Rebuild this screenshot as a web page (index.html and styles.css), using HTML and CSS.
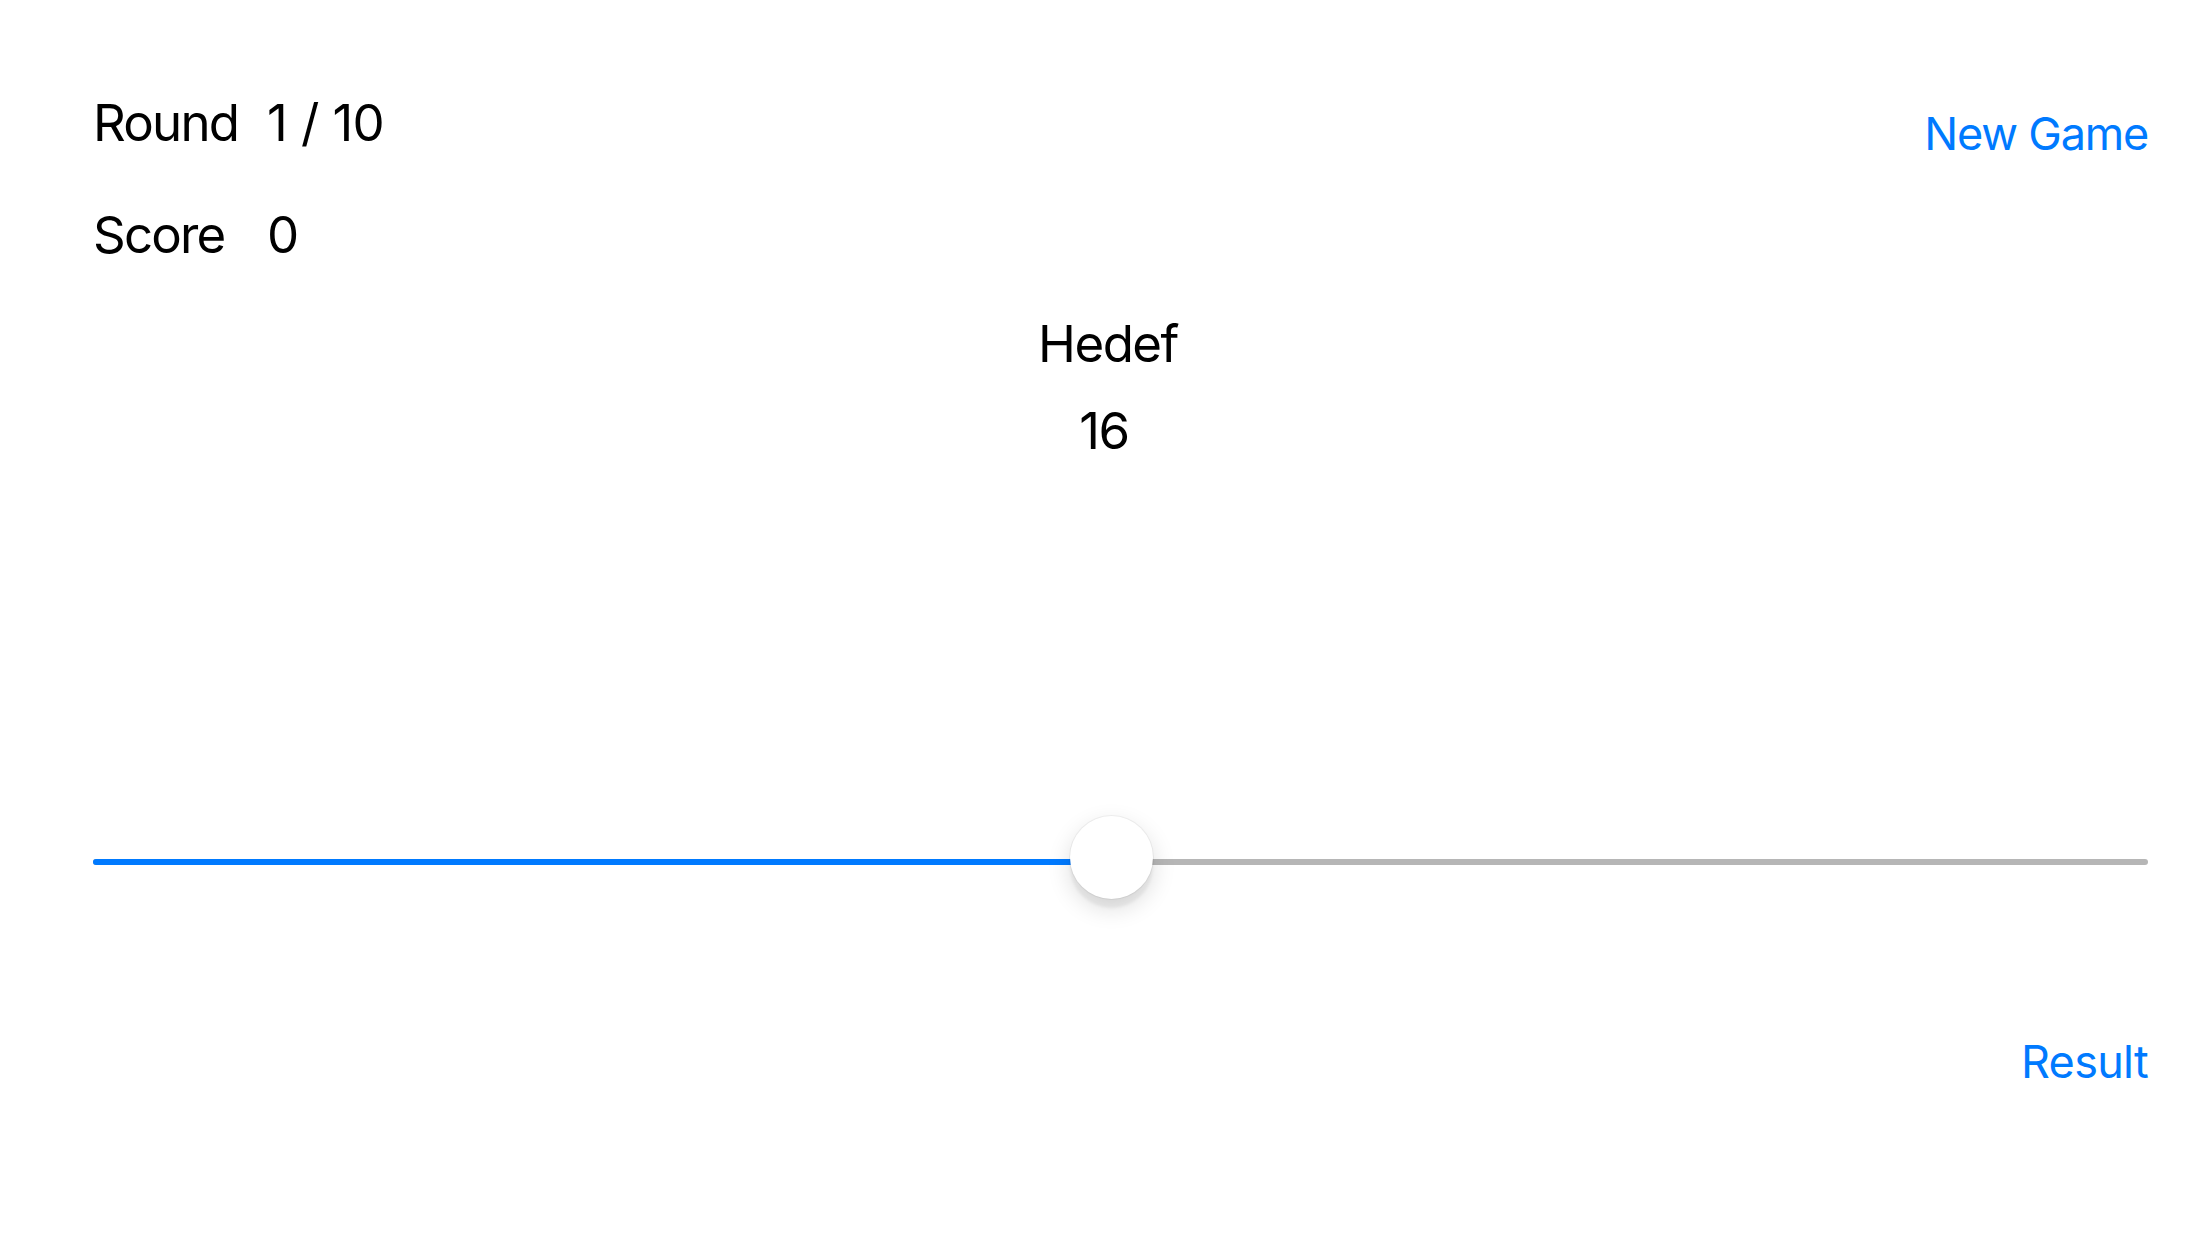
FILE: index.html
```html
<!DOCTYPE html>
<html lang="en">
<head>
<meta charset="utf-8">
<title>Bullseye</title>
<link rel="stylesheet" href="styles.css">
</head>
<body>
<main class="screen">
  <header class="top">
    <div class="stats">
      <span class="label">Round</span><span class="value">1 / 10</span>
      <span class="label">Score</span><span class="value">0</span>
    </div>
    <a class="link new-game" href="#">New Game</a>
  </header>
  <section class="target">
    <div class="target-title">Hedef</div>
    <div class="target-value">16</div>
  </section>
  <div class="slider">
    <div class="track">
      <div class="fill" style="width: 1018px"></div>
      <div class="thumb" style="left: 977px"></div>
    </div>
  </div>
  <footer class="bottom">
    <a class="link result" href="#">Result</a>
  </footer>
</main>
</body>
</html>
```
FILE: styles.css
```css
html, body {
  margin: 0;
  padding: 0;
  background: #ffffff;
}
body {
  width: 2208px;
  height: 1242px;
  overflow: hidden;
  font-family: Inter, "Noto Sans", "Liberation Sans", sans-serif;
  color: #000000;
}
.screen {
  box-sizing: border-box;
  height: 1242px;
  padding: 0 60px 0 93px;
  display: flex;
  flex-direction: column;
}
.top {
  display: flex;
  justify-content: space-between;
  align-items: flex-start;
  padding-top: 92px;
}
.stats {
  display: grid;
  grid-template-columns: 174px auto;
  row-gap: 50px;
  font-size: 51px;
  line-height: 62px;
  letter-spacing: -1.8px;
}
.label, .value {
  white-space: nowrap;
}
.value {
  letter-spacing: -0.6px;
}
.link {
  color: #007aff;
  text-decoration: none;
  font-size: 45px;
  line-height: 56px;
  letter-spacing: -1.2px;
  white-space: nowrap;
}
.result {
  letter-spacing: -0.7px;
}
.new-game {
  margin-top: 14px;
}
.target {
  display: flex;
  flex-direction: column;
  align-items: center;
  font-size: 51px;
  line-height: 62px;
  letter-spacing: -1.5px;
  margin: 47px -60px 0 -93px;
  row-gap: 25px;
}
.target-title {
  padding-left: 8px;
}
.slider {
  margin-top: 397px;
  height: 6px;
}
.track {
  position: relative;
  height: 6px;
  border-radius: 3px;
  background: #b6b6b6;
}
.fill {
  height: 6px;
  border-radius: 3px;
  background: #007aff;
}
.thumb {
  position: absolute;
  top: -43px;
  width: 83px;
  height: 83px;
  border-radius: 50%;
  background: #ffffff;
  box-shadow: 0 0 0 1px rgba(0, 0, 0, 0.05), 0 9px 24px rgba(0, 0, 0, 0.14), 0 9px 3px rgba(0, 0, 0, 0.05);
}
.bottom {
  display: flex;
  justify-content: flex-end;
  margin-top: 169px;
}
```
